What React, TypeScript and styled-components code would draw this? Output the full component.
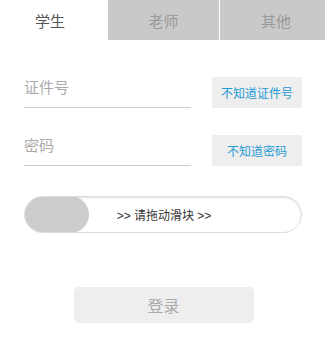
import { useState } from "react";
import styled, { createGlobalStyle } from "styled-components";

const GlobalStyle = createGlobalStyle`
  html, body {
    margin: 0;
    padding: 0;
    background: #fff;
  }
  body {
    font-family: "Liberation Sans", "Noto Sans CJK SC", sans-serif;
  }
  * {
    box-sizing: border-box;
  }
`;

const Container = styled.div`
  width: 325px;
  height: 341px;
  background: #fff;
`;

const Tabs = styled.div`
  display: flex;
  height: 40px;
`;

// tabs are not equally wide in the original, and the labels sit a bit off-centre
const Tab = styled.div<{ $active?: boolean; $width: number; $shift: number }>`
  flex: 0 0 ${(p) => p.$width}px;
  display: flex;
  align-items: center;
  justify-content: center;
  padding-left: ${(p) => Math.max(p.$shift, 0)}px;
  padding-right: ${(p) => Math.max(-p.$shift, 0)}px;
  font-size: 15px;
  color: ${(p) => (p.$active ? "#555" : "#999")};
  background: ${(p) => (p.$active ? "#fff" : "#c9c9c9")};
  cursor: pointer;
  & + & {
    border-left: 1px solid #fff;
  }
`;

const Form = styled.form`
  display: flex;
  flex-direction: column;
  padding: 37px 23px 0 24px;
`;

const Row = styled.div`
  display: flex;
  align-items: flex-end;
  justify-content: space-between;
  height: 31px;
  margin-bottom: 27px;
`;

const Input = styled.input`
  width: 167px;
  height: 31px;
  padding: 0 0 10px;
  border: none;
  border-bottom: 1px solid #ccc;
  outline: none;
  font-family: inherit;
  font-size: 15px;
  color: #555;
  &::placeholder {
    color: #aaa;
  }
`;

const Forgot = styled.button`
  width: 90px;
  height: 31px;
  padding: 0;
  border: none;
  background: #eee;
  color: #1f9bd6;
  font-family: inherit;
  font-size: 12px;
  cursor: pointer;
`;

const Slider = styled.div`
  position: relative;
  display: flex;
  align-items: center;
  justify-content: center;
  height: 37px;
  margin-top: 3px;
  border-radius: 19px;
  border: 1px solid #ddd;
  box-shadow: inset 0 1px 2px rgba(0, 0, 0, 0.12);
  font-size: 12px;
  color: #333;
  overflow: hidden;
`;

const Knob = styled.div`
  position: absolute;
  left: -1px;
  top: -1px;
  width: 65px;
  height: 37px;
  border-radius: 19px;
  background: #ccc;
  cursor: grab;
`;

const Hint = styled.span`
  padding-left: 2px;
`;

const Submit = styled.button`
  align-self: center;
  width: 180px;
  height: 36px;
  margin: 54px 0 0 1px;
  border: none;
  border-radius: 5px;
  background: #eee;
  color: #aaa;
  font-family: inherit;
  font-size: 16px;
  cursor: not-allowed;
`;

const tabs = [
  { label: "学生", width: 107, shift: -7 },
  { label: "老师", width: 112, shift: 0 },
  { label: "其他", width: 106, shift: 7 },
];

const App = () => {
  const [active, setActive] = useState(0);
  const [id, setId] = useState("");
  const [password, setPassword] = useState("");

  return (
    <Container>
      <GlobalStyle />
      <Tabs>
        {tabs.map((t, i) => (
          <Tab
            key={t.label}
            $active={i === active}
            $width={t.width}
            $shift={t.shift}
            onClick={() => setActive(i)}
          >
            {t.label}
          </Tab>
        ))}
      </Tabs>
      <Form onSubmit={(e) => e.preventDefault()}>
        <Row>
          <Input
            placeholder="证件号"
            value={id}
            onChange={(e) => setId(e.target.value)}
          />
          <Forgot type="button">不知道证件号</Forgot>
        </Row>
        <Row>
          <Input
            placeholder="密码"
            type="password"
            value={password}
            onChange={(e) => setPassword(e.target.value)}
          />
          <Forgot type="button">不知道密码</Forgot>
        </Row>
        <Slider>
          <Knob />
          <Hint>&gt;&gt; 请拖动滑块 &gt;&gt;</Hint>
        </Slider>
        <Submit type="submit" disabled>
          登录
        </Submit>
      </Form>
    </Container>
  );
};

export default App;
